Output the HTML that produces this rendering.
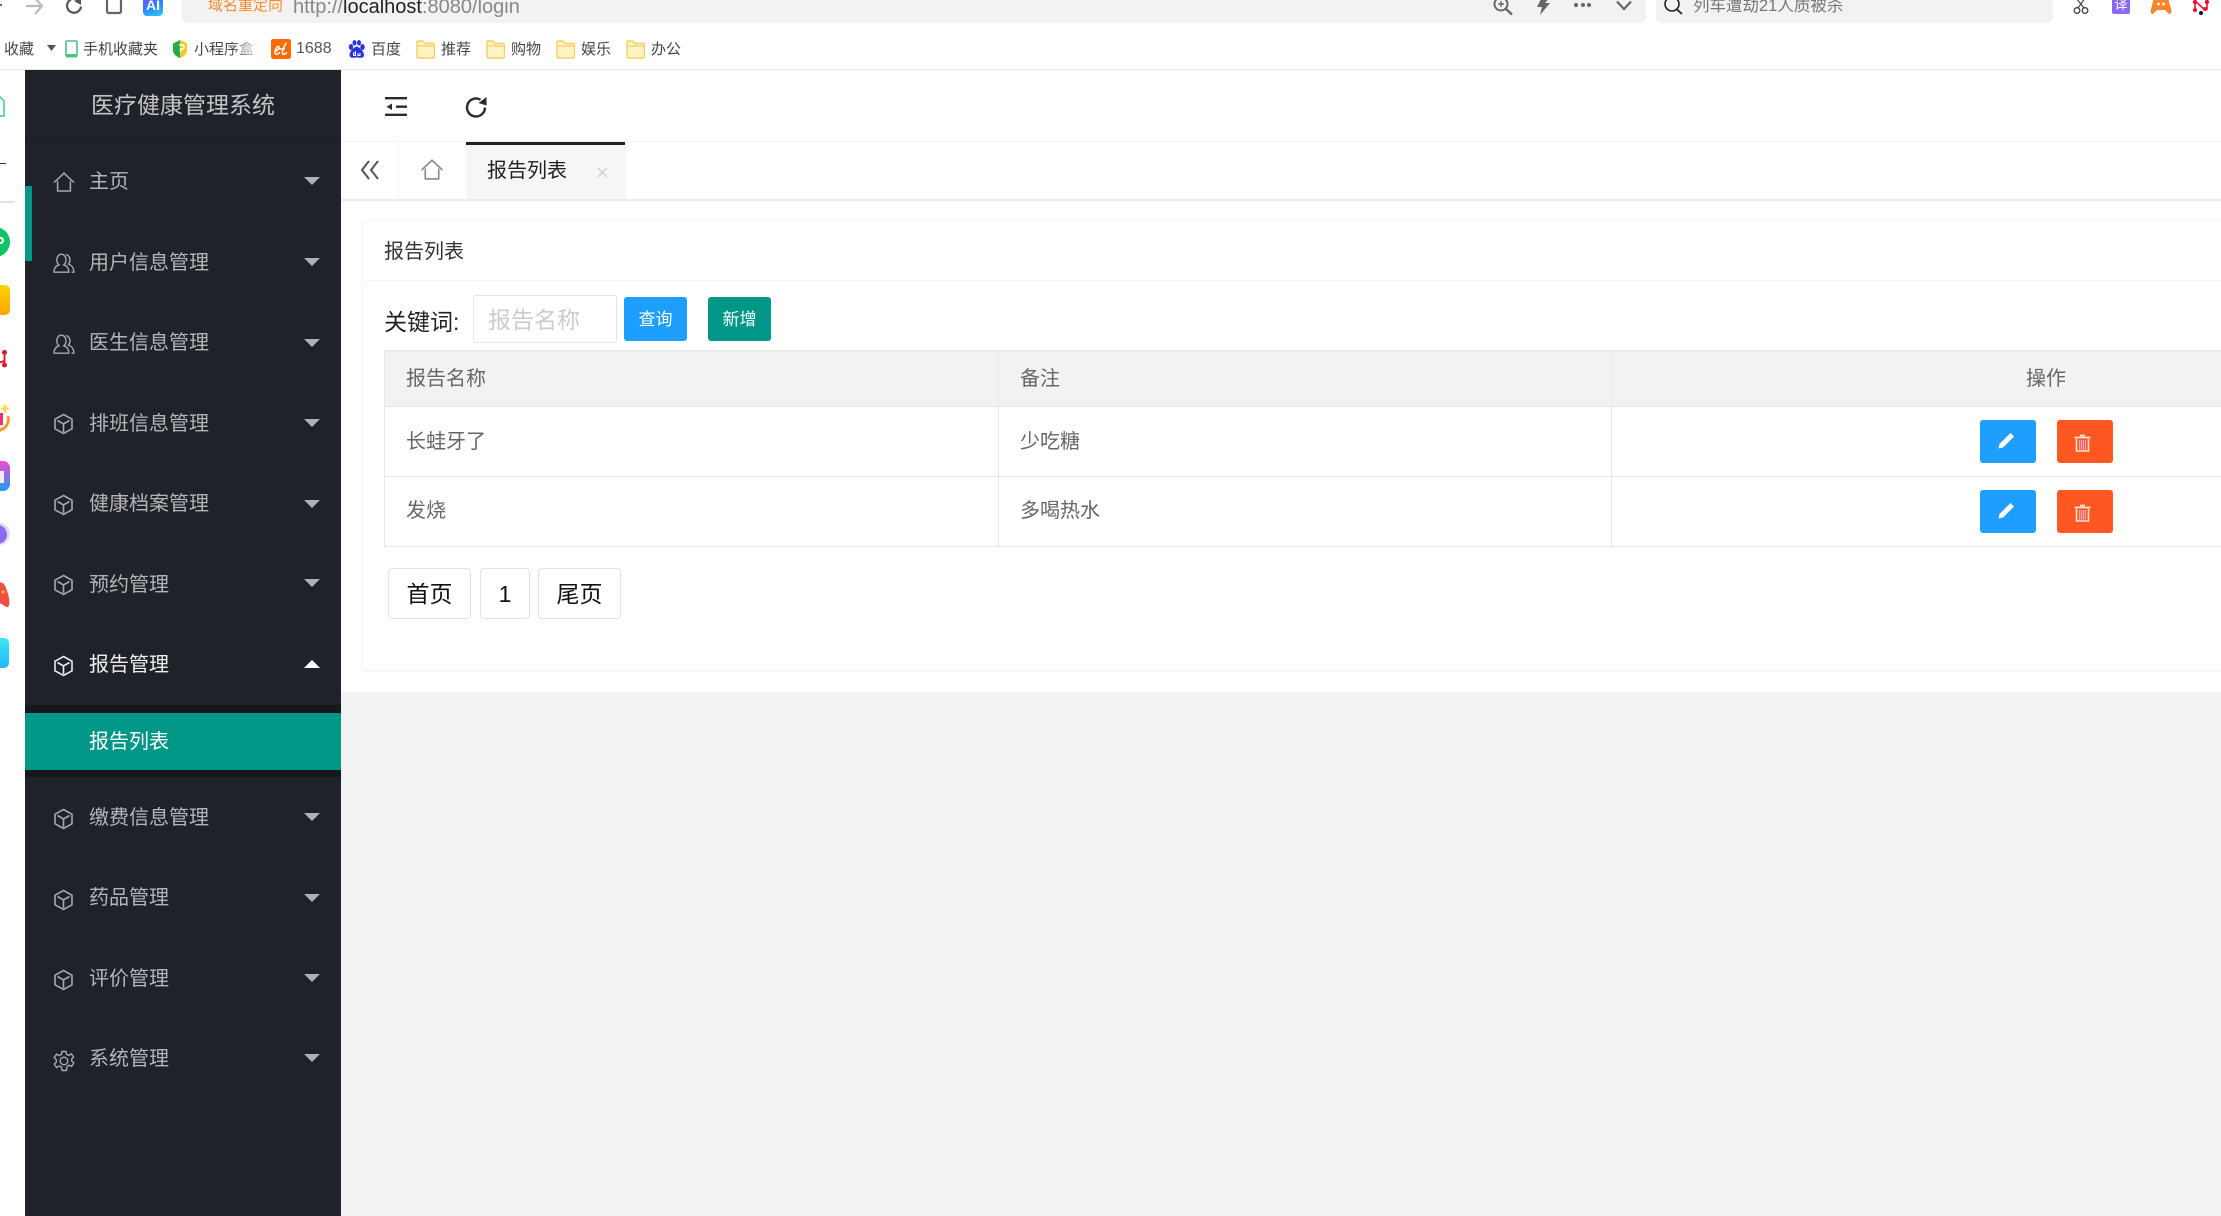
<!DOCTYPE html>
<html lang="zh-CN">
<head>
<meta charset="utf-8">
<title>报告列表</title>
<style>
html,body{margin:0;padding:0;width:2221px;height:1216px;overflow:hidden;background:#f2f2f2}
body{position:relative;font-family:"Liberation Sans","Noto Sans CJK SC",sans-serif}
.a{position:absolute}
.t{position:absolute;white-space:nowrap;line-height:1;margin-top:1px}
.bm{font-size:15px;color:#444;top:41px}
.m{font-size:20px;color:#b4b5b8;left:89px}
.h{font-size:20px;color:#666}
.tb{position:absolute;background:#e6e6e6}
svg{position:absolute;overflow:visible}
.btn{position:absolute;border-radius:3px;color:#fff;text-align:center;font-size:17px;line-height:46px}
.pg{position:absolute;top:568px;height:49px;line-height:50px;border:1px solid #e2e2e2;border-radius:4px;background:#fff;color:#111;font-size:23px;text-align:center;box-sizing:content-box}
</style>
</head>
<body>
<svg width="0" height="0" style="position:absolute">
<defs>
<symbol id="cube" viewBox="0 0 20 22"><path d="M10 1.500 18.500 6.200V15.800L10 20.500 1.500 15.800V6.200ZM4 7.500 10 11 16 7.500M10 11V19" fill="none" stroke-width="1.6"/></symbol>
<symbol id="user" viewBox="0 0 22 20"><path d="M1 19.200C1 14.800 3.600 12.600 6 11.800 4.400 10.600 3.800 8.800 3.800 7 3.800 3.600 5.800 1.200 8.400 1.200 11 1.200 13 3.600 13 7 13 8.800 12.400 10.600 10.800 11.800 13.400 12.600 15.800 14.800 15.800 19.200ZM13 1.600C15.400 2 17 4.200 17 6.800 17 8.600 16.400 10 15.400 11 18.600 12.200 20.800 14.800 21 19.200H18.600" fill="none" stroke-width="1.4"/></symbol>
<symbol id="home" viewBox="0 0 22 20"><path d="M1 10.500 11 1.200 21 10.500M4.600 9V19H17.400V9" fill="none" stroke-width="1.5"/></symbol>
<symbol id="gear" viewBox="0 0 22 22"><path d="M9 1.500H13L13.600 4.400 15.800 5.400 18.300 3.800 20.600 7 18.600 9 18.800 11 20.800 13 18.600 16.400 16 15.200 14 16.600 13.400 20.500H9.200L8.400 17 6.200 16 3.600 17.600 1.300 14.200 3.400 12 3.200 9.600 1.200 7.600 3.600 4.200 6.200 5.600 8.400 4.400Z" fill="none" stroke-width="1.4"/><circle cx="11" cy="11" r="3.800" fill="none" stroke-width="1.4"/></symbol>
<symbol id="folder" viewBox="0 0 19 20"><path d="M1 3.500C1 2.500 1.500 2 2.500 2H7L9 4.500H17C18 4.500 18.500 5 18.500 6V17.500C18.500 18.500 18 19 17 19H2.500C1.500 19 1 18.500 1 17.500Z" fill="#fff3c4" stroke="#f6cf62" stroke-width="1.4"/><path d="M1 7H18.500" stroke="#f6cf62" stroke-width="1.2"/></symbol>
</defs>
</svg>

<!-- browser chrome -->
<div class="a" style="left:0;top:0;width:2221px;height:70px;background:#fff;border-bottom:1px solid #e4e4e4;box-sizing:border-box"></div>
<div class="a" style="left:182px;top:-6px;width:1464px;height:29px;background:#f2f2f2;border-radius:6px"></div>
<div class="a" style="left:1656px;top:-6px;width:397px;height:29px;background:#f2f2f2;border-radius:6px"></div>

<svg style="left:0;top:0" width="8" height="14"><path d="M-6 5H2" stroke="#666" stroke-width="2"/></svg>
<svg style="left:25px;top:0" width="18" height="16"><path d="M1 6H16M10 -2 17 6 10 14" fill="none" stroke="#bbb" stroke-width="2.200"/></svg>
<svg style="left:65px;top:0" width="18" height="16"><path d="M16 6.500A7 7 0 1 1 11 -1" fill="none" stroke="#555" stroke-width="2.200"/><path d="M9 1 16 -3V5Z" fill="#555"/></svg>
<svg style="left:105px;top:0" width="18" height="16"><path d="M2 0 2 11Q2 13 4 13H14Q16 13 16 11V0" fill="none" stroke="#666" stroke-width="2.200"/></svg>
<div class="a" style="left:143px;top:-3px;width:20px;height:19px;border-radius:4px;background:linear-gradient(160deg,#8a4dff,#2e7cff 45%,#2bd0ff);color:#fff;font-size:14px;font-weight:bold;line-height:17px;text-align:center">AI</div>

<div class="t" style="left:208px;top:-3px;font-size:15px;color:#ff8a2b">域名重定向</div>
<div class="t" style="left:293px;top:-4px;font-size:20px;color:#888">http://<span style="color:#222">localhost</span>:8080/login</div>

<svg style="left:1493px;top:0" width="20" height="15"><circle cx="8" cy="4" r="6.500" fill="none" stroke="#666" stroke-width="2"/><path d="M13 9 19 14.500" stroke="#666" stroke-width="2.400"/><path d="M5 4H11M8 1V7" stroke="#666" stroke-width="1.400"/></svg>
<svg style="left:1535px;top:0" width="16" height="15"><path d="M7 -3H15L10 3H15L5 15 7 7H2Z" fill="#666"/></svg>
<div class="a" style="left:1574px;top:3px;width:4px;height:4px;border-radius:50%;background:#666;box-shadow:7px 0 #666,13px 0 #666"></div>
<svg style="left:1616px;top:0" width="16" height="12"><path d="M1 1.500 8 9 15 1.500" fill="none" stroke="#666" stroke-width="2.200"/></svg>
<svg style="left:1664px;top:0" width="20" height="15"><circle cx="8" cy="4" r="7" fill="none" stroke="#222" stroke-width="1.600"/><path d="M13 9.500 18 14" stroke="#222" stroke-width="1.800"/></svg>
<div class="t" style="left:1693px;top:-3px;font-size:16.500px;color:#777">列车遭劫21人质被杀</div>

<svg style="left:2072px;top:0" width="18" height="15"><path d="M4 -2 12 8M13 -2 6 8" stroke="#444" stroke-width="1.200" fill="none"/><circle cx="5" cy="10.500" r="2.800" fill="none" stroke="#444" stroke-width="1.300"/><circle cx="13" cy="10.500" r="2.800" fill="none" stroke="#444" stroke-width="1.300"/></svg>
<div class="a" style="left:2112px;top:-3px;width:18px;height:17px;background:#8b68f5;border-radius:2px;color:#fff;font-size:13px;line-height:16px;text-align:center">译</div>
<svg style="left:2150px;top:0" width="22" height="15"><path d="M3 14C1 14 0 12 1 9L4 -2H18L21 9C22 12 21 14 19 14L15 10H7Z" fill="#ff8427"/><circle cx="8.500" cy="4" r="1.400" fill="#fff"/><circle cx="13.500" cy="4" r="1.400" fill="#fff"/></svg>
<svg style="left:2192px;top:0" width="18" height="16"><path d="M3 1V11M3 1 13 10M15 1V10" stroke="#e8112d" stroke-width="1.600" fill="none"/><circle cx="3" cy="2" r="2.200" fill="#e8112d"/><circle cx="15" cy="2" r="2.200" fill="#e8112d"/><circle cx="3" cy="10" r="2" fill="#e8112d"/><circle cx="13" cy="9" r="2" fill="#e8112d"/><circle cx="9" cy="13" r="2" fill="#111"/></svg>

<!-- bookmarks -->
<div class="t bm" style="left:4px">收藏</div>
<svg style="left:47px;top:45px" width="9" height="6"><path d="M0 0H9L4.500 6Z" fill="#555"/></svg>
<svg style="left:65px;top:40px" width="13" height="18"><rect x="1" y="1" width="11" height="15" rx="1" fill="#fff" stroke="#4dc38a" stroke-width="1.600"/><rect x="1" y="14" width="11" height="3.500" fill="#4dc38a"/></svg>
<div class="t bm" style="left:83px">手机收藏夹</div>
<svg style="left:172px;top:40px" width="16" height="18"><path d="M8 0 15 3.500V11C15 14 11 17 8 18 5 17 1 14 1 11V3.500Z" fill="#2aa84a"/><path d="M8 0 15 3.500V11C15 14 11 17 8 18Z" fill="#f5cc1f"/><path d="M7 5H10.500Q12 5 12 7 12 9 10 9H8.500V12" fill="none" stroke="#fff" stroke-width="1.400"/></svg>
<div class="t bm" style="left:194px;color:transparent;background:linear-gradient(90deg,#444 60%,#ccc);-webkit-background-clip:text;background-clip:text">小程序盒</div>
<svg style="left:271px;top:39px" width="20" height="20"><rect width="20" height="20" rx="2.500" fill="#ff6a00"/><path d="M4 12.500C6 12 9 9 8 7.500 6.500 6 3.500 11 4 14 4.500 16 7 15 9 13.500M15.500 3.500C13 7 11 12 11.500 14.500 12 16 14 15 16 13.500M8.500 10H14" fill="none" stroke="#fff" stroke-width="1.500"/></svg>
<div class="t bm" style="left:296px;font-size:16px;top:40px;color:#555">1688</div>
<svg style="left:348px;top:40px" width="18" height="18"><ellipse cx="3" cy="7" rx="2.200" ry="3" fill="#2932e1"/><ellipse cx="6.500" cy="2.800" rx="2" ry="2.800" fill="#2932e1"/><ellipse cx="11" cy="2.800" rx="2" ry="2.800" fill="#2932e1"/><ellipse cx="14.500" cy="7" rx="2.200" ry="3" fill="#2932e1"/><path d="M8.800 6.500C5 7.500 1.500 12 1.500 15 1.500 18.500 6 18 8.800 17.200 11.500 18 16 18.500 16 15 16 12 12.500 7.500 8.800 6.500Z" fill="#2932e1"/><path d="M7.500 11V15.500H5.500V13H7.500M10 13V15.500H12V13" fill="none" stroke="#fff" stroke-width="1"/></svg>
<div class="t bm" style="left:371px">百度</div>
<svg style="left:416px;top:39px" width="19" height="20"><use href="#folder"/></svg>
<div class="t bm" style="left:441px">推荐</div>
<svg style="left:486px;top:39px" width="19" height="20"><use href="#folder"/></svg>
<div class="t bm" style="left:511px">购物</div>
<svg style="left:556px;top:39px" width="19" height="20"><use href="#folder"/></svg>
<div class="t bm" style="left:581px">娱乐</div>
<svg style="left:626px;top:39px" width="19" height="20"><use href="#folder"/></svg>
<div class="t bm" style="left:651px">办公</div>

<!-- left browser rail -->
<div class="a" style="left:0;top:70px;width:25px;height:1146px;background:#fff"></div>
<svg style="left:0;top:96px" width="6" height="22"><path d="M-6 6 0 1 4 5V20H-6" fill="none" stroke="#2fd27d" stroke-width="1.500"/></svg>
<div class="a" style="left:0;top:163px;width:6px;height:1px;background:#333"></div>
<div class="a" style="left:0;top:201px;width:15px;height:2px;background:#e4e4e4"></div>
<div class="a" style="left:-20px;top:227px;width:30px;height:30px;border-radius:50%;background:#09c566"></div>
<div class="a" style="left:-3px;top:237px;width:7px;height:7px;border-radius:50%;border:2px solid #fff;box-sizing:border-box"></div>
<div class="a" style="left:-20px;top:285px;width:30px;height:30px;border-radius:5px;background:linear-gradient(180deg,#ffd400,#ffa200)"></div>
<svg style="left:0;top:350px" width="9" height="18"><path d="M4.500 2V14M4.500 11 -2 13" stroke="#d81e2c" stroke-width="2"/><circle cx="4.500" cy="2.500" r="2.500" fill="#d81e2c"/><circle cx="4.500" cy="15" r="2.500" fill="#d81e2c"/></svg>
<svg style="left:0;top:403px" width="11" height="30"><path d="M8 13C10 22 4 27 -4 28" fill="none" stroke="#f79a2e" stroke-width="3"/><path d="M0 10H3V22H0Z" fill="#e9356f"/><path d="M5 0 6.500 4 10 5.500 6.500 7 5 11 3.500 7 0 5.500 3.500 4Z" fill="#ffd84a"/></svg>
<div class="a" style="left:-20px;top:461px;width:30px;height:30px;border-radius:7px;background:linear-gradient(180deg,#f545d5,#1f9bf5)"></div>
<div class="a" style="left:0;top:471px;width:4px;height:12px;background:#eee"></div>
<div class="a" style="left:-12px;top:523px;width:22px;height:22px;border-radius:50%;background:#dcdce4"></div>
<div class="a" style="left:-12px;top:525px;width:19px;height:19px;border-radius:50%;background:#8e68f7"></div>
<svg style="left:0;top:582px" width="10" height="26"><path d="M-6 4C0 -2 4 0 6 6 9 14 11 22 8 25 5 26 2 20 -6 20Z" fill="#f0503f"/><circle cx="3" cy="10" r="1.500" fill="#f7c33a"/></svg>
<div class="a" style="left:-20px;top:638px;width:29px;height:30px;border-radius:5px;background:linear-gradient(180deg,#3be8f0,#22b8f5)"></div>

<!-- sidebar -->
<div class="a" style="left:25px;top:70px;width:316px;height:1146px;background:#20222a"></div>
<div class="a" style="left:25px;top:140px;width:316px;height:1px;background:#1c1e25"></div>
<div class="a" style="left:25px;top:186px;width:7px;height:75px;background:#009688"></div>
<div class="t" style="left:91px;top:93px;font-size:23px;color:#c4c5c7">医疗健康管理系统</div>

<svg style="left:53px;top:172px" width="22" height="20" stroke="#a8a9ac"><use href="#home"/></svg>
<div class="t m" style="top:171px">主页</div>
<svg style="left:304px;top:177px" width="16" height="8"><path d="M0 0H16L8 8Z" fill="#b0b1b4"/></svg>

<svg style="left:53px;top:253px" width="22" height="20" stroke="#a8a9ac"><use href="#user"/></svg>
<div class="t m" style="top:252px">用户信息管理</div>
<svg style="left:304px;top:258px" width="16" height="8"><path d="M0 0H16L8 8Z" fill="#b0b1b4"/></svg>

<svg style="left:53px;top:334px" width="22" height="20" stroke="#a8a9ac"><use href="#user"/></svg>
<div class="t m" style="top:332px">医生信息管理</div>
<svg style="left:304px;top:339px" width="16" height="8"><path d="M0 0H16L8 8Z" fill="#b0b1b4"/></svg>

<svg style="left:53px;top:413px" width="21" height="22" stroke="#a8a9ac"><use href="#cube"/></svg>
<div class="t m" style="top:413px">排班信息管理</div>
<svg style="left:304px;top:419px" width="16" height="8"><path d="M0 0H16L8 8Z" fill="#b0b1b4"/></svg>

<svg style="left:53px;top:494px" width="21" height="22" stroke="#a8a9ac"><use href="#cube"/></svg>
<div class="t m" style="top:493px">健康档案管理</div>
<svg style="left:304px;top:500px" width="16" height="8"><path d="M0 0H16L8 8Z" fill="#b0b1b4"/></svg>

<svg style="left:53px;top:574px" width="21" height="22" stroke="#a8a9ac"><use href="#cube"/></svg>
<div class="t m" style="top:574px">预约管理</div>
<svg style="left:304px;top:579px" width="16" height="8"><path d="M0 0H16L8 8Z" fill="#b0b1b4"/></svg>

<svg style="left:53px;top:655px" width="21" height="22" stroke="#ececec"><use href="#cube"/></svg>
<div class="t m" style="top:654px;color:#f0f0f0">报告管理</div>
<svg style="left:304px;top:660px" width="16" height="8"><path d="M0 8H16L8 0Z" fill="#fff"/></svg>

<div class="a" style="left:25px;top:705px;width:316px;height:72px;background:#16181d"></div>
<div class="a" style="left:25px;top:713px;width:316px;height:57px;background:#009688"></div>
<div class="t m" style="top:731px;color:#fff">报告列表</div>

<svg style="left:53px;top:808px" width="21" height="22" stroke="#a8a9ac"><use href="#cube"/></svg>
<div class="t m" style="top:807px">缴费信息管理</div>
<svg style="left:304px;top:813px" width="16" height="8"><path d="M0 0H16L8 8Z" fill="#b0b1b4"/></svg>

<svg style="left:53px;top:889px" width="21" height="22" stroke="#a8a9ac"><use href="#cube"/></svg>
<div class="t m" style="top:887px">药品管理</div>
<svg style="left:304px;top:894px" width="16" height="8"><path d="M0 0H16L8 8Z" fill="#b0b1b4"/></svg>

<svg style="left:53px;top:969px" width="21" height="22" stroke="#a8a9ac"><use href="#cube"/></svg>
<div class="t m" style="top:968px">评价管理</div>
<svg style="left:304px;top:974px" width="16" height="8"><path d="M0 0H16L8 8Z" fill="#b0b1b4"/></svg>

<svg style="left:53px;top:1050px" width="22" height="22" stroke="#a8a9ac"><use href="#gear"/></svg>
<div class="t m" style="top:1048px">系统管理</div>
<svg style="left:304px;top:1054px" width="16" height="8"><path d="M0 0H16L8 8Z" fill="#b0b1b4"/></svg>

<!-- main white area -->
<div class="a" style="left:341px;top:70px;width:1880px;height:622px;background:#fff"></div>
<div class="a" style="left:341px;top:141px;width:1880px;height:1px;background:#f3f3f3"></div>
<div class="a" style="left:341px;top:199px;width:1880px;height:2px;background:#ececec"></div>

<svg style="left:385px;top:97px" width="22" height="20"><path d="M0 1.200H22M0 17.800H22M11 9.700H22" stroke="#2b2b2b" stroke-width="2.400"/><path d="M1.500 9.700 7 6.500V13Z" fill="#2b2b2b"/></svg>
<svg style="left:466px;top:97px" width="21" height="20"><path d="M19 10.500A9 9 0 1 1 14.500 2.700" fill="none" stroke="#2b2b2b" stroke-width="2.400"/><path d="M12.500 6 20.500 0V8.500Z" fill="#2b2b2b"/></svg>

<!-- tab bar -->
<div class="a" style="left:398px;top:142px;width:1px;height:57px;background:#f3f3f3"></div>
<svg style="left:360px;top:160px" width="20" height="20"><path d="M9 1 2 10 9 19M18 1 11 10 18 19" fill="none" stroke="#555" stroke-width="2"/></svg>
<svg style="left:420px;top:159px" width="24" height="21" stroke="#888"><use href="#home"/></svg>
<div class="a" style="left:466px;top:142px;width:160px;height:57px;background:#f6f6f6"></div>
<div class="a" style="left:466px;top:142px;width:159px;height:3px;background:#20222a"></div>
<div class="t" style="left:487px;top:160px;font-size:20px;color:#222">报告列表</div>
<svg style="left:597px;top:167px" width="11" height="11"><path d="M1 1 10 10M10 1 1 10" stroke="#ccc" stroke-width="1.300"/></svg>

<!-- card -->
<div class="a" style="left:362px;top:220px;width:1870px;height:451px;background:#fff;border:1px solid #f6f6f6;box-shadow:0 1px 2px rgba(0,0,0,.04);border-radius:2px;box-sizing:border-box"></div>
<div class="a" style="left:362px;top:280px;width:1859px;height:1px;background:#f6f6f6"></div>
<div class="t" style="left:384px;top:241px;font-size:20px;color:#333">报告列表</div>

<div class="t" style="left:384px;top:310px;font-size:23px;color:#222">关键词:</div>
<div class="a" style="left:473px;top:295px;width:144px;height:48px;border:1px solid #e6e6e6;border-radius:2px;box-sizing:border-box;background:#fff"></div>
<div class="t" style="left:488px;top:308px;font-size:23px;color:#ccc">报告名称</div>
<div class="btn" style="left:624px;top:297px;width:63px;height:44px;background:#1e9fff">查询</div>
<div class="btn" style="left:708px;top:297px;width:63px;height:44px;background:#009688">新增</div>

<!-- table -->
<div class="a" style="left:384px;top:350px;width:1837px;height:57px;background:#f2f2f2"></div>
<div class="tb" style="left:384px;top:350px;width:1837px;height:1px"></div>
<div class="tb" style="left:384px;top:406px;width:1837px;height:1px"></div>
<div class="tb" style="left:384px;top:476px;width:1837px;height:1px"></div>
<div class="tb" style="left:384px;top:546px;width:1837px;height:1px"></div>
<div class="tb" style="left:384px;top:350px;width:1px;height:197px"></div>
<div class="tb" style="left:998px;top:350px;width:1px;height:197px"></div>
<div class="tb" style="left:1611px;top:350px;width:1px;height:197px"></div>

<div class="t h" style="left:406px;top:368px">报告名称</div>
<div class="t h" style="left:1020px;top:368px">备注</div>
<div class="t h" style="left:2026px;top:368px">操作</div>
<div class="t h" style="left:406px;top:431px">长蛙牙了</div>
<div class="t h" style="left:1020px;top:431px">少吃糖</div>
<div class="t h" style="left:406px;top:500px">发烧</div>
<div class="t h" style="left:1020px;top:500px">多喝热水</div>

<div class="a" style="left:1980px;top:420px;width:56px;height:43px;background:#1e9fff;border-radius:3px"></div>
<svg style="left:1998px;top:432px" width="17" height="17"><path d="M12.500 1 16 4.500 5 15.500 0.500 16.500 1.500 12Z" fill="#fff"/></svg>
<div class="a" style="left:2057px;top:420px;width:56px;height:43px;background:#ff5722;border-radius:3px"></div>
<svg style="left:2074px;top:434px" width="17" height="18"><path d="M6 1.500H11M0.500 3.500H16.500" stroke="#ffe3da" stroke-width="1.800"/><path d="M2.500 5V17H14.500V5" fill="none" stroke="#ffe3da" stroke-width="1.600"/><path d="M5 6H12V15.500H5Z" fill="#ffb08f"/><path d="M6.500 6V15.500M8.500 6V15.500M10.500 6V15.500" stroke="#f0608a" stroke-width="1"/></svg>

<div class="a" style="left:1980px;top:490px;width:56px;height:43px;background:#1e9fff;border-radius:3px"></div>
<svg style="left:1998px;top:502px" width="17" height="17"><path d="M12.500 1 16 4.500 5 15.500 0.500 16.500 1.500 12Z" fill="#fff"/></svg>
<div class="a" style="left:2057px;top:490px;width:56px;height:43px;background:#ff5722;border-radius:3px"></div>
<svg style="left:2074px;top:504px" width="17" height="18"><path d="M6 1.500H11M0.500 3.500H16.500" stroke="#ffe3da" stroke-width="1.800"/><path d="M2.500 5V17H14.500V5" fill="none" stroke="#ffe3da" stroke-width="1.600"/><path d="M5 6H12V15.500H5Z" fill="#ffb08f"/><path d="M6.500 6V15.500M8.500 6V15.500M10.500 6V15.500" stroke="#f0608a" stroke-width="1"/></svg>

<!-- pagination -->
<div class="pg" style="left:388px;width:81px">首页</div>
<div class="pg" style="left:480px;width:48px">1</div>
<div class="pg" style="left:538px;width:81px">尾页</div>
</body>
</html>
